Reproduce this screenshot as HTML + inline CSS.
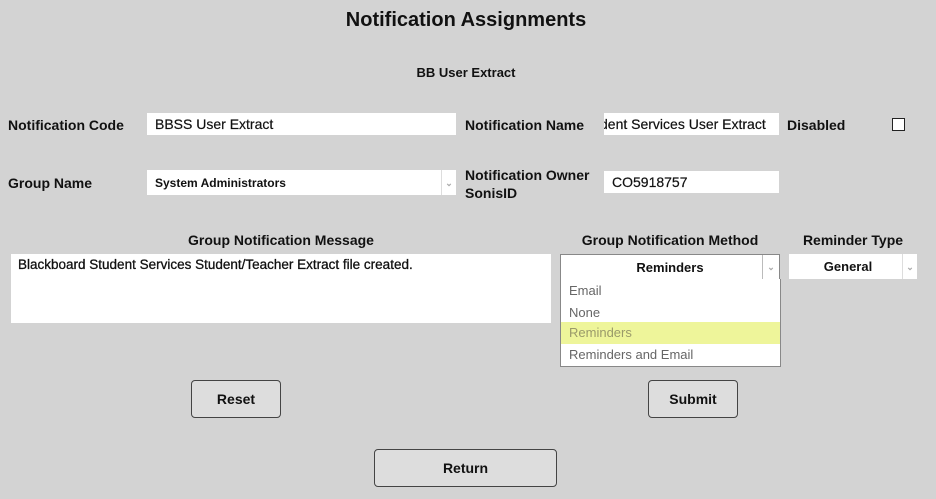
<!DOCTYPE html>
<html><head><style>
body{margin:0;width:936px;height:499px;background:#d3d3d3;font-family:"Liberation Sans",sans-serif;position:relative;overflow:hidden;color:#111}
.a{position:absolute}
.l{font-weight:bold;font-size:14px}
.in{position:absolute;background:#fff;box-sizing:border-box;font-size:14px;padding-left:8px;line-height:22px;overflow:hidden;white-space:nowrap}
.btn{position:absolute;border:1px solid #444;border-radius:4px;background:#ddd;font-weight:bold;font-size:14px;text-align:center;box-sizing:border-box}
.arr{position:absolute;right:0;top:0;bottom:0;width:14px;border-left:1px solid #ddd;color:#aaa;font-size:9px;text-align:center}
.it{position:absolute;left:0;right:0;height:22px;line-height:22px;padding-left:8px;font-size:13px;color:#666}
</style></head><body>
<div class="a" style="left:0;width:932px;top:9px;text-align:center;font-weight:bold;font-size:20px">Notification Assignments</div>
<div class="a" style="left:0;width:932px;top:65px;text-align:center;font-weight:bold;font-size:13px">BB User Extract</div>

<div class="a l" style="left:8px;top:117px">Notification Code</div>
<div class="in" style="left:147px;top:113px;width:309px;height:22px;-webkit-text-stroke:0.2px #111">BBSS User Extract</div>
<div class="a l" style="left:465px;top:117px">Notification Name</div>
<div class="in" style="left:604px;top:113px;width:175px;height:22px;padding-left:0;text-indent:-4px;-webkit-text-stroke:0.2px #111">dent Services User Extract</div>
<div class="a l" style="left:787px;top:117px">Disabled</div>
<div class="a" style="left:892px;top:118px;width:11px;height:11px;border:1px solid #222;background:#fff"></div>

<div class="a l" style="left:8px;top:175px">Group Name</div>
<div class="in" style="left:147px;top:170px;width:309px;height:25px;line-height:26px;font-size:12px;font-weight:bold">System Administrators<div class="arr">&#8964;</div></div>
<div class="a l" style="left:465px;top:166px;line-height:18px">Notification Owner<br>SonisID</div>
<div class="in" style="left:604px;top:171px;width:175px;height:22px;-webkit-text-stroke:0.2px #111">CO5918757</div>

<div class="a l" style="left:11px;width:540px;top:232px;text-align:center">Group Notification Message</div>
<div class="in" style="left:11px;top:254px;width:540px;height:69px;line-height:22px;padding-left:7px;font-size:13.5px;white-space:normal;-webkit-text-stroke:0.3px #111">Blackboard Student Services Student/Teacher Extract file created.</div>

<div class="a l" style="left:560px;width:220px;top:232px;text-align:center">Group Notification Method</div>
<div class="a" style="left:560px;top:254px;width:220px;height:26px;box-sizing:border-box;border:1px solid #888;background:#fff;font-weight:bold;font-size:13px;text-align:center;line-height:25px">Reminders<div class="arr" style="width:16px;border-left:1px solid #bbb">&#8964;</div></div>
<div class="a" style="left:560px;top:279px;width:221px;height:88px;box-sizing:border-box;border:1px solid #888;border-top:0;background:#fff">
<div class="it" style="top:1px">Email</div>
<div class="it" style="top:23px">None</div>
<div class="it" style="top:43px;background:#eef59a;color:#9a9a6a">Reminders</div>
<div class="it" style="top:65px">Reminders and Email</div>
</div>

<div class="a l" style="left:789px;width:128px;top:232px;text-align:center">Reminder Type</div>
<div class="a" style="left:789px;top:254px;width:128px;height:25px;background:#fff;font-weight:bold;font-size:13px;line-height:26px;padding-left:0"><div style="width:118px;text-align:center">General</div><div class="arr">&#8964;</div></div>

<div class="btn" style="left:191px;top:380px;width:90px;height:38px;line-height:36px">Reset</div>
<div class="btn" style="left:648px;top:380px;width:90px;height:38px;line-height:36px">Submit</div>
<div class="btn" style="left:374px;top:449px;width:183px;height:38px;line-height:36px">Return</div>
</body></html>
